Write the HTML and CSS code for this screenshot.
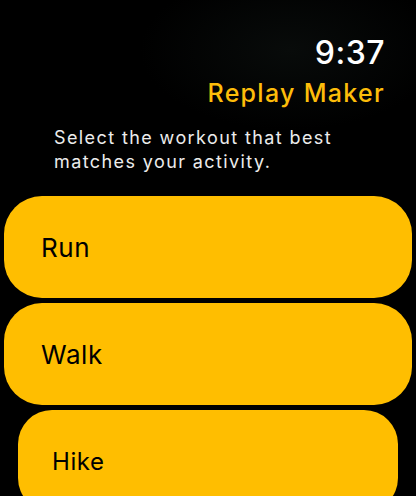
FILE: index.html
```html
<!DOCTYPE html>
<html lang="en">
<head>
    <meta charset="UTF-8">
    <title>Replay Maker</title>
    <link rel="stylesheet" href="styles.css">
</head>
<body>

<div class="screen">
    <div class="header">
        <div class="clock">9:37</div>
        <div class="app_title">Replay Maker</div>
    </div>

    <p class="prompt">Select the workout that best matches your activity.</p>

    <div class="workouts">
        <div class="workout">Run</div>
        <div class="workout">Walk</div>
        <div class="workout workout_far">Hike</div>
    </div>
</div>

</body>
</html>
```

FILE: styles.css
```css
body {
    margin: 0;
    background-color: black;
    font-family: Inter, "Noto Sans", sans-serif;
}

.screen {
    width: 416px;
    height: 496px;
    overflow: hidden;
    background: radial-gradient(ellipse 150px 80px at 290px 50px, #080b0a, black);
}

.header {
    display: flex;
    flex-direction: column;
    align-items: flex-end;
    padding: 34px 31px 0 0;
}

.clock {
    color: white;
    font-size: 32px;
    font-weight: 500;
    line-height: 38px;
    letter-spacing: 0.5px;
}

.app_title {
    color: #fdbd0a;
    font-size: 25px;
    font-weight: 500;
    line-height: 32px;
    margin-top: 5px;
    letter-spacing: 1.3px;
}

.prompt {
    color: #ececec;
    font-size: 18px;
    line-height: 24px;
    letter-spacing: 1.4px;
    margin: 17px 40px 0 54px;
}

.workouts {
    display: flex;
    flex-direction: column;
    gap: 5px;
    margin-top: 22px;
}

.workout {
    background-color: #ffbe00;
    color: black;
    height: 102px;
    margin: 0 4px;
    border-radius: 38px;
    display: flex;
    align-items: center;
    padding-left: 37px;
    font-size: 26px;
    letter-spacing: 0.6px;
}

.workout_far {
    margin: 0 18px;
    padding-left: 34px;
    font-size: 24px;
    border-radius: 34px;
}
```
